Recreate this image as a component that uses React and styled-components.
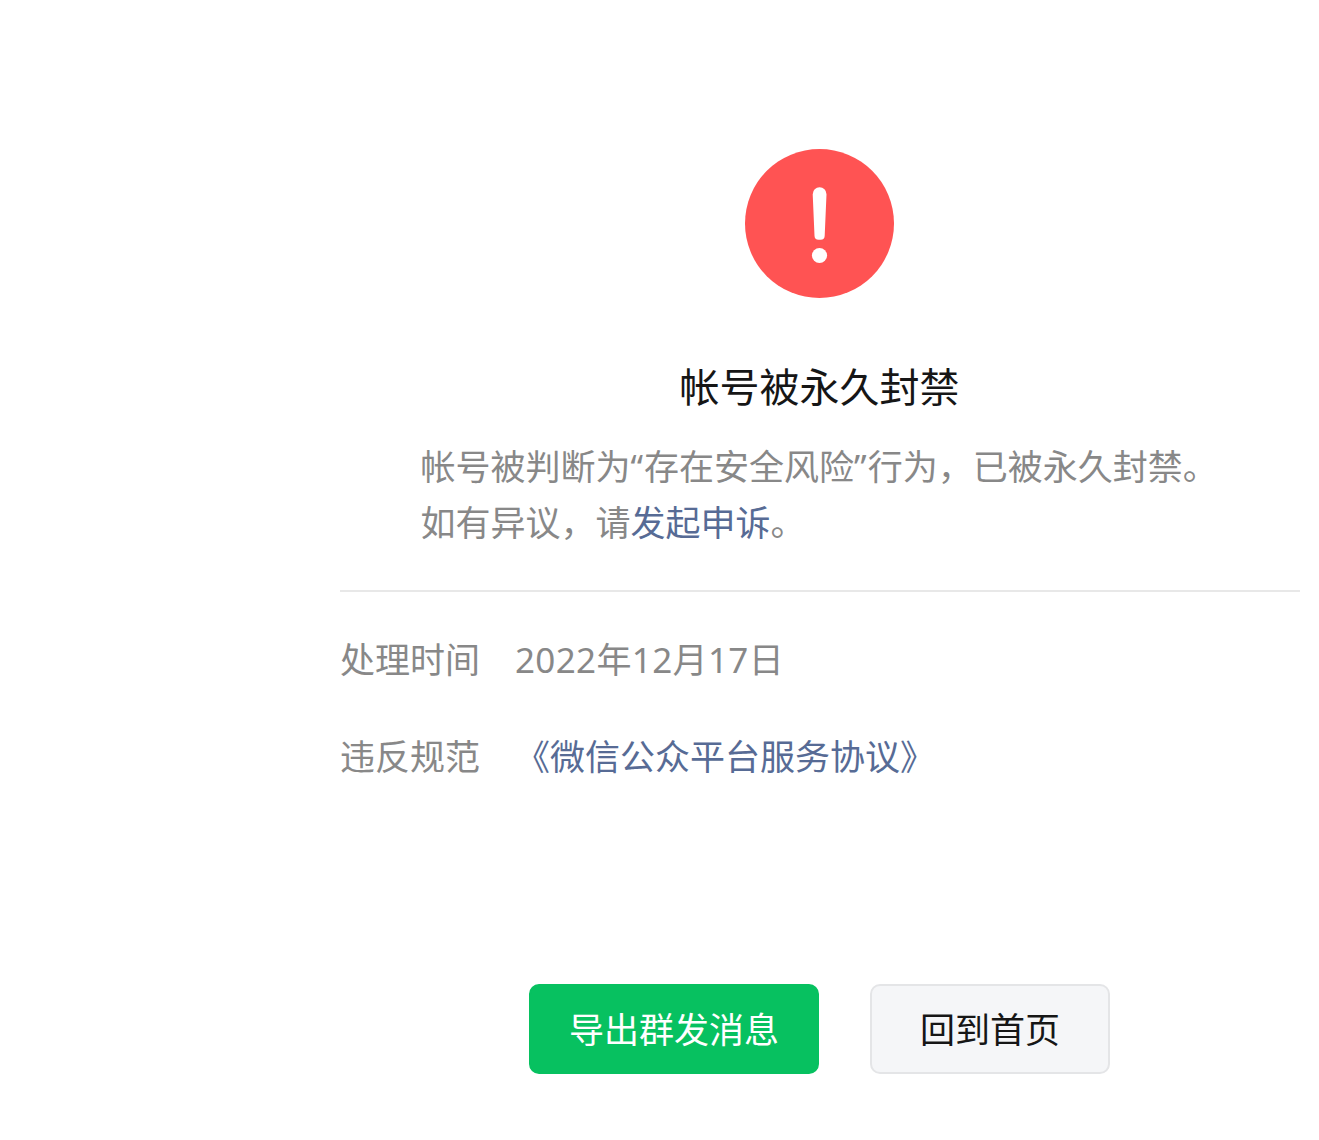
import React from "react";
import styled, { createGlobalStyle } from "styled-components";

const Global = createGlobalStyle`
  html, body { margin: 0; padding: 0; background: #fff; }
  body { font-family: "Noto Sans", "Noto Sans CJK SC", sans-serif; }
`;
const Page = styled.main`
  box-sizing: border-box;
  width: 1319px;
  height: 1140px;
  padding: 149px 19px 0 340px;
  overflow: hidden;
`;
const Hero = styled.section`
  width: 959px;
  display: flex;
  flex-direction: column;
  align-items: center;
`;
const Icon = styled.svg`
  display: block;
  width: 149px;
  height: 149px;
`;
const Title = styled.h1`
  margin: 61px 0 0;
  font-size: 40px;
  line-height: 56px;
  font-weight: 400;
  color: #161616;
`;
const Description = styled.p`
  width: 799px;
  margin: 24px 0 0;
  padding-left: 1px;
  font-size: 35px;
  line-height: 56px;
  color: #888;
`;
const Quote = styled.span`
  letter-spacing: 1px;
`;
const Link = styled.a`
  color: #576b95;
  text-decoration: none;
`;
const Details = styled.dl`
  margin: 39px 0 0;
  padding-top: 40px;
  border-top: 2px solid #e8e8e8;
  display: flex;
  flex-direction: column;
  gap: 41px;
`;
const Row = styled.div`
  display: flex;
  gap: 35px;
  font-size: 35px;
  line-height: 56px;
  color: #888;
`;
const Label = styled.dt`
  width: 140px;
  flex: none;
`;
const Value = styled.dd`
  margin: 0;
`;
const DateText = styled.span`
  letter-spacing: 0.35px;
`;
const Actions = styled.div`
  width: 959px;
  margin-top: 199px;
  display: flex;
  justify-content: center;
  gap: 51px;
`;
const Button = styled.button`
  box-sizing: border-box;
  width: ${(p) => (p.$primary ? "290px" : "240px")};
  height: 90px;
  padding: 0;
  border-radius: 10px;
  border: 2px solid ${(p) => (p.$primary ? "#07c160" : "#e4e5e7")};
  background: ${(p) => (p.$primary ? "#07c160" : "#f5f6f8")};
  color: ${(p) => (p.$primary ? "#fff" : "#161616")};
  font: inherit;
  font-size: 35px;
  line-height: 1;
`;

export default function App() {
  return (
    <Page>
      <Global />
      <Hero>
        <Icon viewBox="0 0 149 149" aria-hidden="true">
          <circle cx="74.5" cy="74.5" r="74.5" fill="#ff5353" />
          <path
            d="M67.7 45.2a6.9 6.9 0 0 1 13.8 0l-1.8 41.6a4.1 4.1 0 0 1-4.1 4h-2a4.1 4.1 0 0 1-4.1-4z"
            fill="#fff"
          />
          <circle cx="74.5" cy="106.5" r="7.6" fill="#fff" />
        </Icon>
        <Title>帐号被永久封禁</Title>
        <Description>
          帐号被判断为<Quote>“</Quote>存在安全风险<Quote>”</Quote>行为，已被永久封禁。
          <br />
          如有异议，请<Link>发起申诉</Link>。
        </Description>
      </Hero>
      <Details>
        <Row>
          <Label>处理时间</Label>
          <Value>
            <DateText>2022年12月17日</DateText>
          </Value>
        </Row>
        <Row>
          <Label>违反规范</Label>
          <Value>
            <Link>《微信公众平台服务协议》</Link>
          </Value>
        </Row>
      </Details>
      <Actions>
        <Button $primary>导出群发消息</Button>
        <Button>回到首页</Button>
      </Actions>
    </Page>
  );
}
